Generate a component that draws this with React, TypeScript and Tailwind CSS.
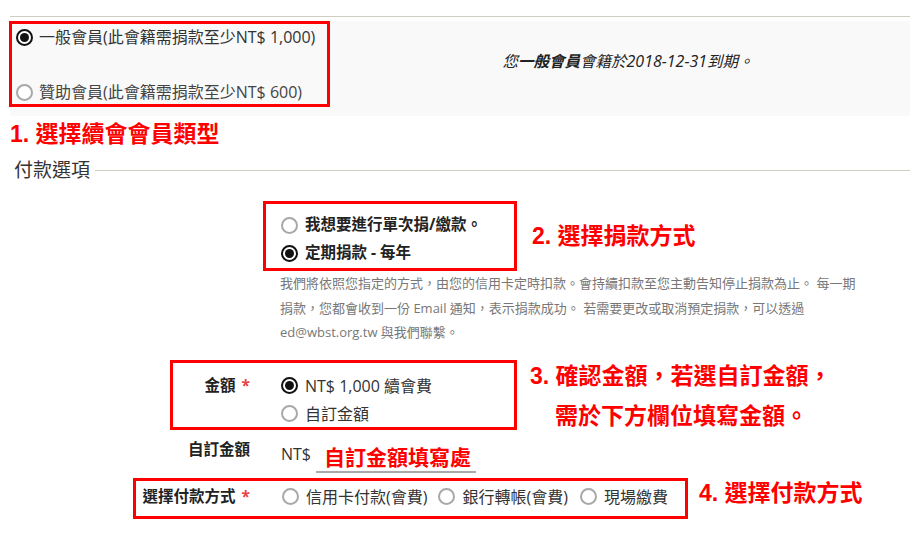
import React from "react";

function Radio({ checked }: { checked?: boolean }) {
  return checked ? (
    <span className="w-[17px] h-[17px] rounded-full border-2 border-[#111] bg-white flex items-center justify-center shrink-0">
      <span className="w-[9px] h-[9px] rounded-full bg-[#111]" />
    </span>
  ) : (
    <span className="w-[17px] h-[17px] rounded-full border-2 border-[#a8a8a8] bg-white shrink-0" />
  );
}

function L({ children }: { children: React.ReactNode }) {
  return <span className="text-[16px]">{children}</span>;
}

const red = "font-['Liberation_Sans','Noto_Sans_CJK_TC',sans-serif] font-bold text-[#ff0000]";

export default function App() {
  return (
    <div className="w-[921px] h-[551px] bg-white overflow-hidden text-[#333] font-['Open_Sans','Noto_Sans_CJK_TC',sans-serif]">
      <div className="pt-[16px] pl-[10px] w-[910px]">
        <div className="h-px bg-[#cfcdc0]" />
        {/* membership block */}
        <div className="mt-[4px] h-[95px] bg-[#f9f9f9] flex">
          <div className="-ml-px w-[321px] h-[86px] border-[3px] border-[#ff0000] flex flex-col justify-between pt-px pl-[4px] text-[16px]">
            <div className="h-[24px] flex items-center gap-[6px]">
              <Radio checked />
              <span>一般會員(此會籍需捐款至少NT$ 1,000)</span>
            </div>
            <div className="h-[24px] flex items-center gap-[6px]">
              <Radio />
              <span className="text-[#444]">贊助會員(此會籍需捐款至少NT$ 600)</span>
            </div>
          </div>
          <div className="flex-1 flex justify-center pt-[28px] pl-[16px]">
            <span className="italic text-[15.5px] leading-[24px] text-[#222]">
              您<b className="font-bold">一般會員</b>會籍於<L>2018-12-31</L>到期。
            </span>
          </div>
        </div>
        <div className={`${red} mt-[5px] text-[23px] leading-[26px]`}>1. 選擇續會會員類型</div>
        {/* legend */}
        <div className="mt-[10px] h-[26px] flex items-center">
          <span className="pl-[4px] text-[19px] leading-[26px] text-[#333]">付款選項</span>
          <div className="flex-1 ml-[5px] h-px bg-[#cfcdc0]" />
        </div>
        {/* donation type */}
        <div className="mt-[18px] flex items-center">
          <div className="ml-[253px] w-[254px] h-[70px] border-[3px] border-[#ff0000] pt-[8px] pl-[15px] flex flex-col gap-[2px] text-[15.5px] font-bold text-[#222]">
            <div className="h-[26px] flex items-center gap-[7px]">
              <Radio />
              <span>我想要進行單次捐/繳款。</span>
            </div>
            <div className="h-[26px] flex items-center gap-[7px]">
              <Radio checked />
              <span>定期捐款 - 每年</span>
            </div>
          </div>
          <div className={`${red} ml-[15px] text-[23px] leading-[26px]`}>2. 選擇捐款方式</div>
        </div>
        <div className="ml-[270px] text-[13px] leading-[24.5px] text-[#777]">
          我們將依照您指定的方式，由您的信用卡定時扣款。會持續扣款至您主動告知停止捐款為止。 每一期
          <br />
          捐款，您都會收到一份 Email 通知，表示捐款成功。 若需要更改或取消預定捐款，可以透過
          <br />
          ed@wbst.org.tw 與我們聯繫。
        </div>
        {/* amount */}
        <div className="mt-[15px] flex items-start">
          <div className="ml-[160px] w-[347px] h-[70px] border-[3px] border-[#ff0000] pt-[10px] flex text-[16px]">
            <div className="w-[77px] h-[26px] flex items-center justify-end font-bold text-[15.5px] text-[#222]">
              金額<span className="ml-[6px] text-[#e8424a]">*</span>
            </div>
            <div className="ml-[31px] flex flex-col gap-[2px]">
              <div className="h-[26px] flex items-center gap-[7px]">
                <Radio checked />
                <span>NT$ 1,000 續會費</span>
              </div>
              <div className="h-[26px] flex items-center gap-[7px]">
                <Radio />
                <span>自訂金額</span>
              </div>
            </div>
          </div>
          <div className={`${red} -mt-[4px] h-[70px] ml-[13px] text-[23px] leading-[40px]`}>
            <div>3. 確認金額，若選自訂金額，</div>
            <div className="pl-[25px]">需於下方欄位填寫金額。</div>
          </div>
        </div>
        {/* custom amount */}
        <div className="mt-[8px] flex items-start text-[16px]">
          <div className="w-[240px] text-right font-bold text-[15.5px] leading-[22px] text-[#222]">自訂金額</div>
          <div className="ml-[31px] mt-[5px] leading-[22px]">NT$</div>
          <div className="ml-[5px] w-[160px] h-[35px] border-b-2 border-[#aaa] flex items-end pb-[1px] pl-[8px]">
            <span className={`${red} text-[21px] leading-[24px]`}>自訂金額填寫處</span>
          </div>
        </div>
        {/* payment */}
        <div className="mt-[5px] flex items-center">
          <div className="ml-[123px] w-[555px] h-[41px] border-[3px] border-[#ff0000] flex items-center pb-[3px] text-[16px]">
            <div className="w-[114px] flex justify-end font-bold text-[15.5px] text-[#222]">
              選擇付款方式<span className="ml-[6px] text-[#e8424a]">*</span>
            </div>
            <div className="ml-[32px] flex items-center gap-[7px]">
              <Radio />
              <span>信用卡付款(會費)</span>
            </div>
            <div className="ml-[11px] flex items-center gap-[7px]">
              <Radio />
              <span>銀行轉帳(會費)</span>
            </div>
            <div className="ml-[12px] flex items-center gap-[7px]">
              <Radio />
              <span>現場繳費</span>
            </div>
          </div>
          <div className={`${red} ml-[11px] pb-[10px] text-[23px] leading-[30px]`}>4. 選擇付款方式</div>
        </div>
      </div>
    </div>
  );
}
